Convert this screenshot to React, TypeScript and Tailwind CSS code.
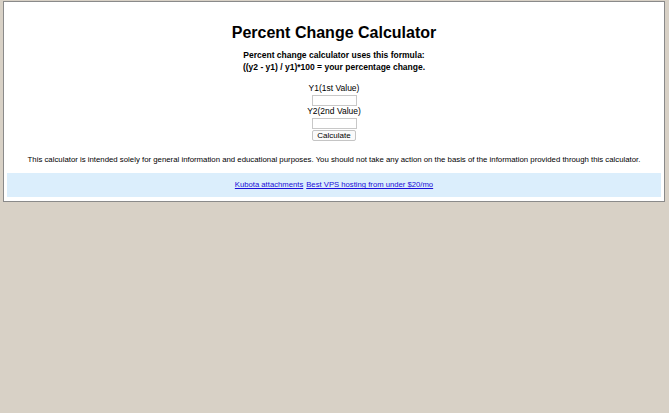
import { useState } from "react";

function App() {
  const [y1, setY1] = useState("");
  const [y2, setY2] = useState("");

  return (
    <div className="min-h-[413px] bg-[#d8d1c6] pt-px pl-[3px] pr-[4px] font-['Liberation_Sans',Arial,sans-serif] text-black">
      <div className="border border-[#8a8a8a] bg-white px-[3px] pt-[20px] pb-[4px] text-center">
        <h1 className="text-[16px] font-bold leading-[22px]">Percent Change Calculator</h1>

        <div className="mt-[5px] text-[8.5px] font-bold leading-[12px]">
          <p>Percent change calculator uses this formula:</p>
          <p>((y2 - y1) / y1)*100 = your percentage change.</p>
        </div>

        {/* Form */}
        <div className="mt-[10px] flex flex-col items-center text-[8.5px] leading-[11px]">
          <label htmlFor="y1">Y1(1st Value)</label>
          <input
            id="y1"
            value={y1}
            onChange={(e) => setY1(e.target.value)}
            className="mt-px h-[11px] w-[45px] border border-[#c8c8c8] bg-white"
          />
          <label htmlFor="y2">Y2(2nd Value)</label>
          <input
            id="y2"
            value={y2}
            onChange={(e) => setY2(e.target.value)}
            className="mt-px h-[11px] w-[45px] border border-[#c8c8c8] bg-white"
          />
          <button className="mt-px h-[11px] rounded-[2px] border border-[#c4c4c4] bg-[#fafafa] px-[4px] text-[8px] leading-[9px]">
            Calculate
          </button>
        </div>

        <p className="mt-[13px] text-[7.8px] leading-[11px]">
          This calculator is intended solely for general information and educational purposes. You should not take any action on the basis of the information provided through this calculator.
        </p>

        {/* Links */}
        <div className="mt-[8px] flex h-[24px] items-center justify-center gap-[3px] bg-[#dbeefc] text-[7.7px]">
          <a href="#" className="text-[#1a0dd8] underline">Kubota attachments</a>
          <a href="#" className="text-[#1a0dd8] underline">Best VPS hosting from under $20/mo</a>
        </div>
      </div>
    </div>
  );
}

export default App;
